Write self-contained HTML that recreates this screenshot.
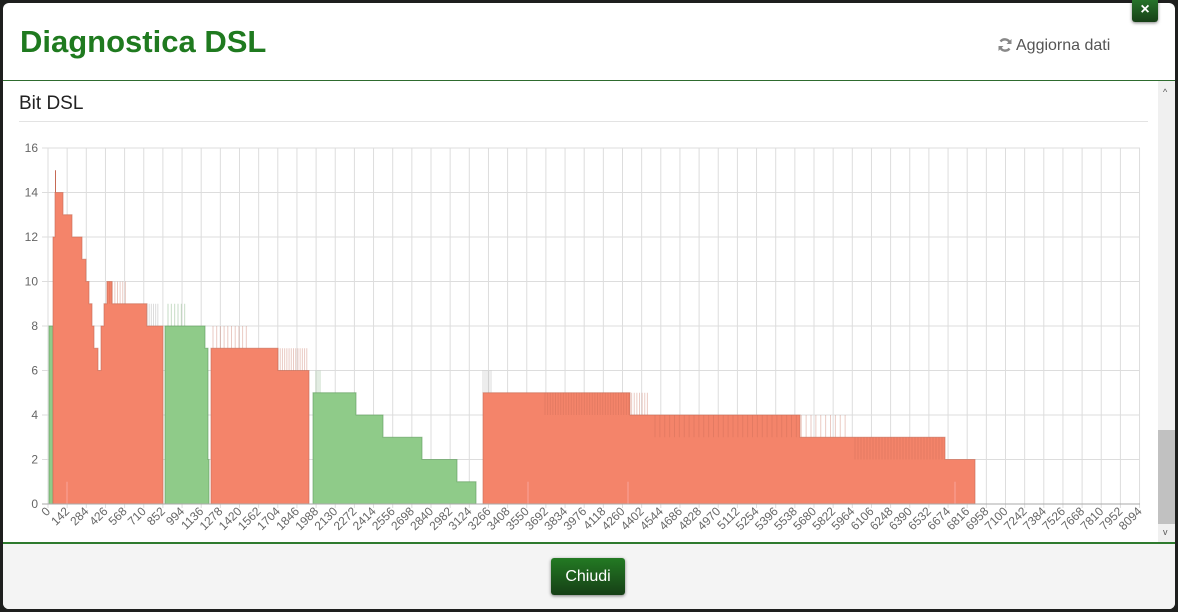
<!DOCTYPE html>
<html><head><meta charset="utf-8"><style>
html,body{margin:0;padding:0;width:1178px;height:612px;overflow:hidden;background:#1e1f1e;font-family:"Liberation Sans",sans-serif}
.modal{position:absolute;left:3px;top:3px;width:1172px;height:606px;background:#fff;border-radius:6px;overflow:hidden}
.title{position:absolute;left:17px;top:21px;font-size:31px;font-weight:bold;color:#1f7a1f;margin:0}
.upd{position:absolute;left:994px;top:34px;font-size:16px;color:#555}
.hdrline{position:absolute;left:0;top:77px;width:1172px;height:1px;background:#2e6b2e}
.sub{position:absolute;left:16px;top:90px;font-size:19px;color:#222}
.hr{position:absolute;left:16px;top:118px;width:1129px;height:1px;background:#e3e3e3}
.scroll{position:absolute;left:1155px;top:78px;width:17px;height:461px;background:#f0f0f0}
.thumb{position:absolute;left:1155px;top:427px;width:17px;height:94px;background:#c1c1c1}
.footer{position:absolute;left:0;top:539px;width:1172px;height:67px;background:#f4f4f4;border-top:2px solid #2e7a2e}
.btn{position:absolute;left:548px;top:14px;width:74px;height:37px;background:linear-gradient(#237a23,#163f16);border-radius:3px;color:#fff;font-size:16px;line-height:37px;text-align:center;box-shadow:0 1px 3px rgba(0,0,0,.5)}
.close{position:absolute;left:1132px;top:0;width:26px;height:22px;background:linear-gradient(#26732a,#173f17);border-radius:0 0 3px 3px;color:#fff;font-weight:bold;font-size:16px;text-align:center;line-height:20px;box-shadow:0 1px 3px rgba(0,0,0,.5)}
</style></head><body>
<div class="modal">
<div class="title">Diagnostica DSL</div>
<div class="upd"><svg width="16" height="16" viewBox="0 0 16 16" style="vertical-align:-3px;margin-right:3px"><path d="M13 6A5.5 5.5 0 0 0 3.5 4.5" stroke="#888" stroke-width="2.4" fill="none"/><path d="M14.5 2v5h-5z" fill="#888"/><path d="M3 10a5.5 5.5 0 0 0 9.5 1.5" stroke="#888" stroke-width="2.4" fill="none"/><path d="M1.5 14V9h5z" fill="#888"/></svg>Aggiorna dati</div>
<div class="hdrline"></div>
<div class="sub">Bit DSL</div>
<div class="hr"></div>
<div class="scroll"><div style="position:absolute;left:5px;top:6px;font-size:9px;color:#555">^</div><div style="position:absolute;left:5px;top:446px;font-size:9px;color:#555">v</div></div>
<div class="thumb"></div>
<svg style="position:absolute;left:-3px;top:-3px" width="1178" height="545" id="ch"></svg>
<div class="footer"><div class="btn">Chiudi</div></div>
</div>
<div class="close">×</div>
<script>
const s=document.getElementById('ch');let h='';
const Y=b=>504-b*22.25;
for(let b=0;b<=16;b+=2){h+=`<line x1="42" x2="1140" y1="${Y(b)}" y2="${Y(b)}" stroke="#ddd"/>`;h+=`<text x="38" y="${Y(b)+4}" font-size="12" fill="#666" text-anchor="end">${b}</text>`;}
for(let i=0;i<=57;i++){const x=48+i*19.15;h+=`<line x1="${x}" x2="${x}" y1="148" y2="508" stroke="#ddd"/>`;h+=`<text transform="translate(${x+3},${512}) rotate(-45)" font-size="12" fill="#666" text-anchor="end">${i*142}</text>`;}
function seg(pts,fill,st){let d=`M${pts[0][0]},504`;for(let i=0;i<pts.length;i++){const [x,b]=pts[i];d+=`L${x},${Y(b)}`;const nx=i+1<pts.length?pts[i+1][0]:pts[i][2];d+=`L${nx},${Y(b)}`;}d+=`L${pts[pts.length-1][2]},504Z`;h+=`<path d="${d}" fill="${fill}" stroke="${st}" stroke-width="1" stroke-opacity=".6"/>`;}
const R='#f4846a',RS='#c66a55',G='#8fcb89',GS='#5e9a5c';
seg([[49,8,53]],G,GS);
seg([[53,12],[55,14],[63,13],[72,12],[82,11],[86,10],[89,9],[92,8],[94,7],[98,6],[101,8],[104,9],[107,10],[112,9],[147,8,163]],R,RS);
seg([[165,8],[205,7],[208,2,209]],G,GS);
seg([[211,7],[278,6,309]],R,RS);
seg([[313,5],[356,4],[383,3],[422,2],[457,1,476]],G,GS);
seg([[483,5],[630,4],[800,3],[945,2,975]],R,RS);
h+=`<line x1="55.5" x2="55.5" y1="${Y(15)}" y2="${Y(14)}" stroke="#c66a55"/>`;
function sp(x0,x1,b,c,n){for(let i=0;i<n;i++){const x=x0+(x1-x0)*i/n;h+=`<line x1="${x}" x2="${x}" y1="${Y(b)}" y2="${Y(b-1)}" stroke="${c}" opacity=".35"/>`;}}
sp(107,128,10,'#c66a55',8);sp(147,160,9,'#999',6);sp(168,188,9,'#5e9a5c',6);sp(213,250,8,'#c66a55',10);sp(278,309,7,'#c66a55',14);sp(316,322,6,'#5e9a5c',3);sp(483,493,6,'#999',5);sp(545,650,5,'#c66a55',40);sp(655,850,4,'#c66a55',40);sp(855,945,3,'#c66a55',30);
[67,528,628,955].forEach(x=>h+=`<line x1="${x}" x2="${x}" y1="${Y(1)}" y2="504" stroke="#fbb" opacity=".6"/>`);
h+=`<line x1="42" x2="1140" y1="504" y2="504" stroke="#aaa"/>`;
s.innerHTML=h;
</script>
</body></html>
